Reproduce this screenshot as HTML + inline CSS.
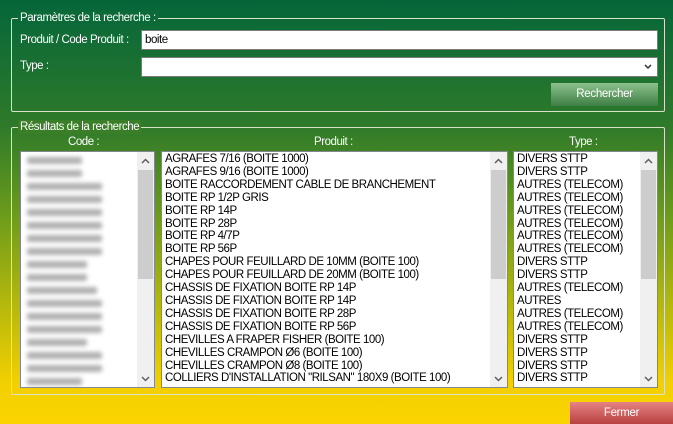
<!DOCTYPE html>
<html><head><meta charset="utf-8"><style>
*{margin:0;padding:0;box-sizing:border-box}
body{width:673px;height:424px;overflow:hidden;position:relative;font-family:"Liberation Sans",sans-serif;font-size:11.5px;letter-spacing:-0.45px;
background:linear-gradient(180deg,#05663a 0%,#2f7a2a 30%,#6a9a1c 50%,#b5b80c 72%,#f2cf02 90%,#fbd400 100%)}
.a{position:absolute}
.grp{position:absolute;border:1px solid #d8e2c8;border-radius:2px}
.lbl{position:absolute;color:#fff;white-space:nowrap;line-height:14px}
.inp{position:absolute;background:#fff;border:1px solid #7a7a7a;height:20px;line-height:18px;padding-left:3px;color:#000}
.list{position:absolute;background:#fff;border:1px solid #828790;overflow:hidden}
.list .t{position:absolute;left:3px;top:1px;line-height:12.9px;color:#000;white-space:nowrap}
.sb{position:absolute;top:0;right:0;width:17px;bottom:0;background:#f0f0f0}
.sb .th{position:absolute;left:1px;right:1px;top:18px;height:109px;background:#cdcdcd}
.sb .up,.sb .dn{position:absolute;left:0;width:17px;height:17px}
.sb .up{top:0}.sb .dn{bottom:0}
.sb svg{position:absolute;left:4px;top:6px}
.btn{position:absolute;color:#fff;text-align:center;line-height:22px;letter-spacing:-0.3px}
.bl{position:absolute;left:6px;height:7px;background:#b0b0b0;filter:blur(2px);border-radius:2px}
</style></head><body>
<div class="grp" style="left:11px;top:18px;width:654px;height:94px"></div>
<div class="lbl" style="left:18px;top:11px;background:#0b6a37;padding:0 2px">Paramètres de la recherche :</div>
<div class="lbl" style="left:20px;top:33px">Produit / Code Produit :</div>
<div class="inp" style="left:141px;top:30px;width:517px">boite</div>
<div class="lbl" style="left:20px;top:59px">Type :</div>
<div class="inp" style="left:141px;top:57px;width:517px"><svg class="a" style="right:5px;top:6px" width="8" height="6"><path d="M1 1L4 4L7 1" stroke="#333" stroke-width="1.5" fill="none"/></svg></div>
<div class="btn" style="left:551px;top:83px;width:107px;height:23px;background:linear-gradient(#8cc08c,#3e7f45);">Rechercher</div>

<div class="grp" style="left:11px;top:127px;width:654px;height:268px"></div>
<div class="lbl" style="left:18px;top:120px;background:#3a7e27;padding:0 2px">Résultats de la recherche</div>
<div class="lbl" style="left:68px;top:135px">Code :</div>
<div class="lbl" style="left:314px;top:135px">Produit :</div>
<div class="lbl" style="left:569px;top:135px">Type :</div>

<div class="list" style="left:20px;top:151px;width:135px;height:237px">
<div class="bl" style="top:5px;width:55px"></div><div class="bl" style="top:18px;width:55px"></div>
<div class="bl" style="top:31px;width:75px"></div><div class="bl" style="top:44px;width:75px"></div>
<div class="bl" style="top:57px;width:75px"></div><div class="bl" style="top:70px;width:75px"></div>
<div class="bl" style="top:83px;width:75px"></div><div class="bl" style="top:96px;width:75px"></div>
<div class="bl" style="top:109px;width:60px"></div><div class="bl" style="top:122px;width:60px"></div>
<div class="bl" style="top:135px;width:70px"></div><div class="bl" style="top:148px;width:75px"></div>
<div class="bl" style="top:161px;width:75px"></div><div class="bl" style="top:174px;width:75px"></div>
<div class="bl" style="top:187px;width:60px"></div><div class="bl" style="top:200px;width:75px"></div>
<div class="bl" style="top:213px;width:75px"></div><div class="bl" style="top:226px;width:55px"></div>
<div class="sb"><div class="up"><svg width="9" height="6"><path d="M1 5L4.5 1.5L8 5" stroke="#606060" stroke-width="1.5" fill="none"/></svg></div><div class="th"></div><div class="dn"><svg width="9" height="6"><path d="M1 1L4.5 4.5L8 1" stroke="#606060" stroke-width="1.5" fill="none"/></svg></div></div></div>

<div class="list" style="left:161px;top:151px;width:347px;height:237px"><div class="t">AGRAFES 7/16 (BOITE 1000)<br>AGRAFES 9/16 (BOITE 1000)<br>BOITE RACCORDEMENT CABLE DE BRANCHEMENT<br>BOITE RP 1/2P GRIS<br>BOITE RP 14P<br>BOITE RP 28P<br>BOITE RP 4/7P<br>BOITE RP 56P<br>CHAPES POUR FEUILLARD DE 10MM (BOITE 100)<br>CHAPES POUR FEUILLARD DE 20MM (BOITE 100)<br>CHASSIS DE FIXATION BOITE RP 14P<br>CHASSIS DE FIXATION BOITE RP 14P<br>CHASSIS DE FIXATION BOITE RP 28P<br>CHASSIS DE FIXATION BOITE RP 56P<br>CHEVILLES A FRAPER FISHER (BOITE 100)<br>CHEVILLES CRAMPON Ø6 (BOITE 100)<br>CHEVILLES CRAMPON Ø8 (BOITE 100)<br>COLLIERS D'INSTALLATION "RILSAN" 180X9 (BOITE 100)</div>
<div class="sb"><div class="up"><svg width="9" height="6"><path d="M1 5L4.5 1.5L8 5" stroke="#606060" stroke-width="1.5" fill="none"/></svg></div><div class="th"></div><div class="dn"><svg width="9" height="6"><path d="M1 1L4.5 4.5L8 1" stroke="#606060" stroke-width="1.5" fill="none"/></svg></div></div></div>

<div class="list" style="left:513px;top:151px;width:145px;height:237px"><div class="t">DIVERS STTP<br>DIVERS STTP<br>AUTRES (TELECOM)<br>AUTRES (TELECOM)<br>AUTRES (TELECOM)<br>AUTRES (TELECOM)<br>AUTRES (TELECOM)<br>AUTRES (TELECOM)<br>DIVERS STTP<br>DIVERS STTP<br>AUTRES (TELECOM)<br>AUTRES<br>AUTRES (TELECOM)<br>AUTRES (TELECOM)<br>DIVERS STTP<br>DIVERS STTP<br>DIVERS STTP<br>DIVERS STTP</div>
<div class="sb"><div class="up"><svg width="9" height="6"><path d="M1 5L4.5 1.5L8 5" stroke="#606060" stroke-width="1.5" fill="none"/></svg></div><div class="th"></div><div class="dn"><svg width="9" height="6"><path d="M1 1L4.5 4.5L8 1" stroke="#606060" stroke-width="1.5" fill="none"/></svg></div></div></div>

<div class="btn" style="left:570px;top:402px;width:103px;height:22px;background:linear-gradient(#e58383,#b84040);">Fermer</div>
</body></html>
